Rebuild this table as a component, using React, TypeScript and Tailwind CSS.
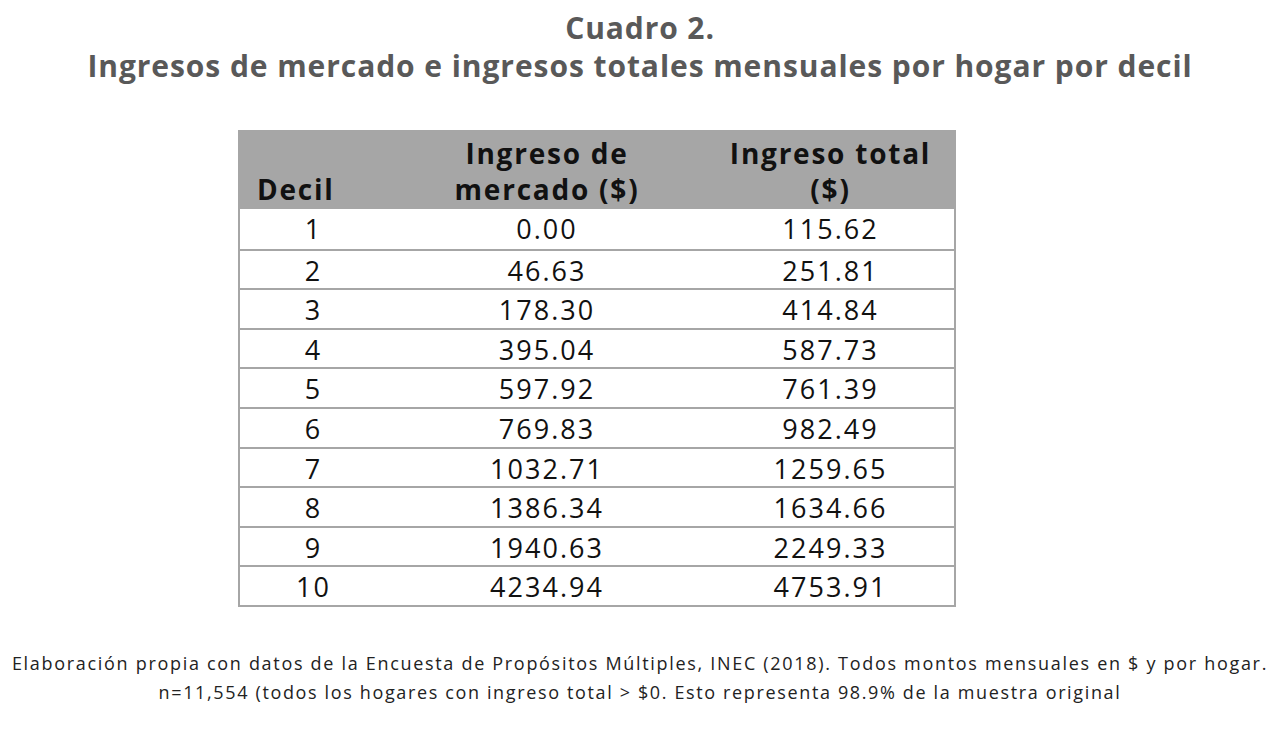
import React from "react";

const rows: [string, string, string][] = [
  ["1", "0.00", "115.62"],
  ["2", "46.63", "251.81"],
  ["3", "178.30", "414.84"],
  ["4", "395.04", "587.73"],
  ["5", "597.92", "761.39"],
  ["6", "769.83", "982.49"],
  ["7", "1032.71", "1259.65"],
  ["8", "1386.34", "1634.66"],
  ["9", "1940.63", "2249.33"],
  ["10", "4234.94", "4753.91"],
];

export default function App() {
  return (
    <div className="w-[1280px] h-[730px] bg-white flex flex-col overflow-hidden">
      <div className="mt-[9px] text-center text-[#595959] font-bold text-[30px] leading-[38px] font-['Open_Sans',sans-serif]">
        <div className="tracking-[0.03em]">Cuadro 2.</div>
        <div className="tracking-[0.031em]">Ingresos de mercado e ingresos totales mensuales por hogar por decil</div>
      </div>
      <div className="mt-[45px] ml-[238px] w-[718px] border-x-2 border-b-2 border-[#a6a6a6] font-['Open_Sans',sans-serif] text-[#111]">
        <div className="grid grid-cols-[147px_320px_1fr] bg-[#a6a6a6] h-[79px] items-end font-bold text-[28px] leading-[36px] pb-[2px] tracking-[0.063em]">
          <div className="pl-[17px]">Decil</div>
          <div className="text-center">Ingreso de<br />mercado ($)</div>
          <div className="text-center">Ingreso total<br />($)</div>
        </div>
        {rows.map((r, i) => (
          <div
            key={i}
            className={`grid grid-cols-[147px_320px_1fr] h-[39.6px] items-center text-[27px] tracking-[0.075em] ${i > 0 ? "border-t-2 border-[#a6a6a6]" : ""}`}
          >
            <div className="text-center">{r[0]}</div>
            <div className="text-center">{r[1]}</div>
            <div className="text-center">{r[2]}</div>
          </div>
        ))}
      </div>
      <div className="mt-[42px] text-center text-[#222] text-[18px] leading-[29px] font-['Open_Sans',sans-serif]">
        <div className="tracking-[0.094em]">Elaboración propia con datos de la Encuesta de Propósitos Múltiples, INEC (2018). Todos montos mensuales en $ y por hogar.</div>
        <div className="tracking-[0.091em]">n=11,554 (todos los hogares con ingreso total &gt; $0. Esto representa 98.9% de la muestra original</div>
      </div>
    </div>
  );
}
